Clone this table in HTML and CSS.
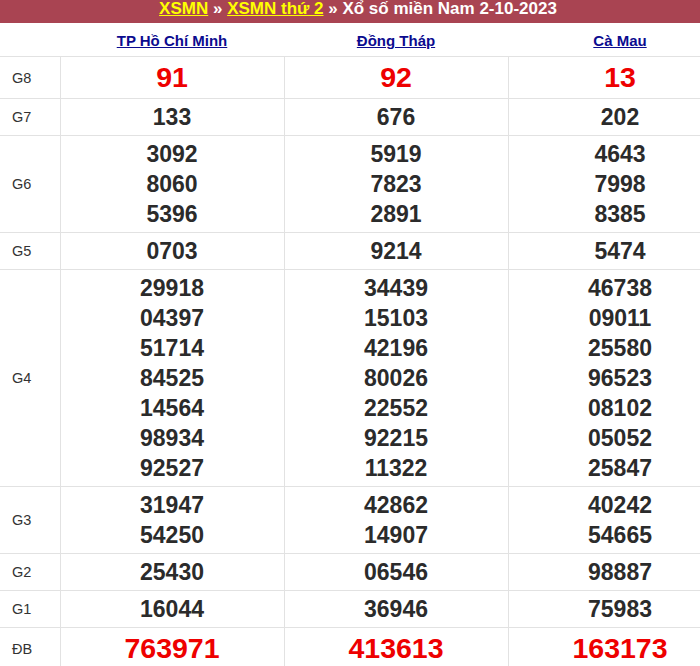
FILE: index.html
```html
<!DOCTYPE html>
<html lang="vi">
<head>
<meta charset="utf-8">
<link rel="stylesheet" href="styles.css">
</head>
<body>
<div class="page">
  <div class="title"><a href="#">XSMN</a> » <a href="#">XSMN thứ 2</a> » Xổ số miền Nam 2-10-2023</div>
  <table class="result">
    <colgroup><col class="c-label"><col class="c-prov"><col class="c-prov"><col class="c-prov"></colgroup>
    <thead>
      <tr class="prov-row"><th></th><th><a href="#">TP Hồ Chí Minh</a></th><th><a href="#">Đồng Tháp</a></th><th><a href="#">Cà Mau</a></th></tr>
    </thead>
    <tbody>
      <tr class="big"><td class="lbl">G8</td><td class="red">91</td><td class="red">92</td><td class="red">13</td></tr>
      <tr><td class="lbl">G7</td><td>133</td><td>676</td><td>202</td></tr>
      <tr><td class="lbl">G6</td><td>3092<br>8060<br>5396</td><td>5919<br>7823<br>2891</td><td>4643<br>7998<br>8385</td></tr>
      <tr><td class="lbl">G5</td><td>0703</td><td>9214</td><td>5474</td></tr>
      <tr><td class="lbl">G4</td><td>29918<br>04397<br>51714<br>84525<br>14564<br>98934<br>92527</td><td>34439<br>15103<br>42196<br>80026<br>22552<br>92215<br>11322</td><td>46738<br>09011<br>25580<br>96523<br>08102<br>05052<br>25847</td></tr>
      <tr><td class="lbl">G3</td><td>31947<br>54250</td><td>42862<br>14907</td><td>40242<br>54665</td></tr>
      <tr><td class="lbl">G2</td><td>25430</td><td>06546</td><td>98887</td></tr>
      <tr><td class="lbl">G1</td><td>16044</td><td>36946</td><td>75983</td></tr>
      <tr class="big"><td class="lbl">ĐB</td><td class="red">763971</td><td class="red">413613</td><td class="red">163173</td></tr>
    </tbody>
  </table>
</div>
</body>
</html>
```
FILE: styles.css
```css
html, body { margin: 0; padding: 0; background: #fff; }
body { overflow: hidden; width: 700px; height: 666px; font-family: "Liberation Sans", Arial, sans-serif; }
.page { width: 731px; }
.title {
  background: #a94452;
  color: #fff;
  font-weight: bold;
  font-size: 17px;
  height: 23px;
  line-height: 18px;
  text-align: center;
  box-sizing: border-box;
  width: 700px;
  padding-left: 16px;
  white-space: nowrap;
}
.title a { color: #ffff00; text-decoration: underline; }
.result { border-collapse: collapse; width: 731px; table-layout: fixed; }
.c-label { width: 60px; }
.c-prov { width: 224px; }
.prov-row th { height: 31px; padding: 2px 0 0 0; border-bottom: 1px solid #e2e2e2; font-size: 15px; font-weight: bold; vertical-align: middle; }
.prov-row th a { color: #0b0b8f; text-decoration: underline; }
.result td {
  border: 1px solid #e2e2e2;
  text-align: center;
  font-weight: bold;
  font-size: 23px;
  line-height: 30px;
  color: #2b2b2b;
  padding: 3px 0 3px 0;
  vertical-align: middle;
}
.result td.lbl { font-size: 14.5px; font-weight: normal; color: #333; text-align: left; padding-left: 12px; border-left: none; }
.result tr.big td { line-height: 35px; }
.result tr.big td.lbl { line-height: 30px; }
.result td.red { color: #ee0000; font-size: 28.5px; }
```
